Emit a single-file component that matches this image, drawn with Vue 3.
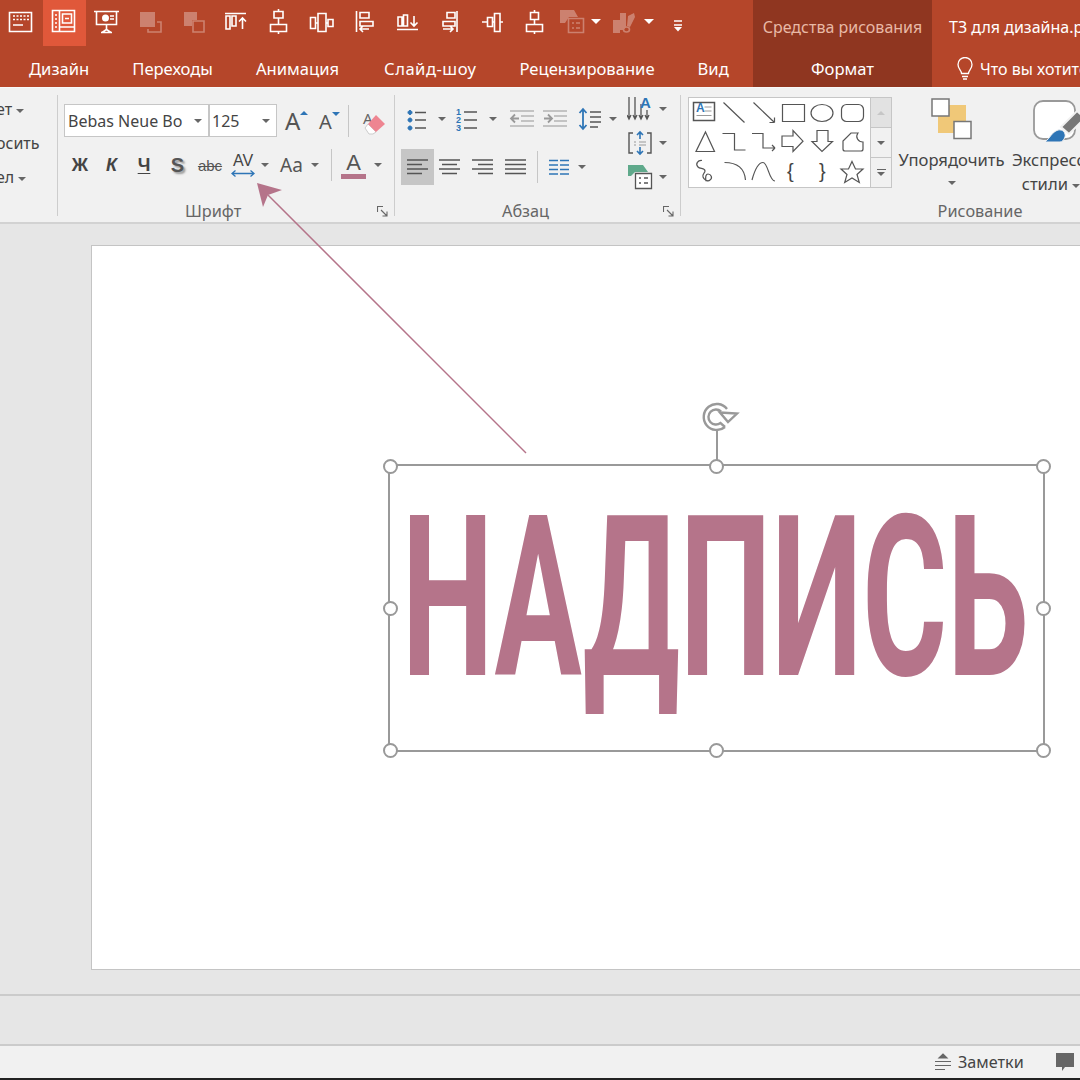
<template>
  <div class="app">
    <!-- title bar + tabs -->
    <header class="head">
      <div class="head-main">
        <div class="qat">
          <div
            v-for="(item, i) in qat"
            :key="i"
            :class="['qat-item', { active: item.active, dim: item.dim, wide: item.caret }]"
            :style="item.w ? { width: item.w + 'px' } : null"
          >
            <svg width="26" height="26" viewBox="0 0 26 26">
              <path :d="item.d" fill="none" stroke="#fff" stroke-width="1.6" />
              <path v-if="item.solid" :d="item.solid" fill="#fff" />
            </svg>
            <span v-if="item.caret" class="caret white"></span>
          </div>
        </div>
        <nav class="tabs">
          <span v-for="t in tabs" :key="t">{{ t }}</span>
        </nav>
      </div>
      <div class="head-context">
        <div class="ctx-title">Средства рисования</div>
        <div class="ctx-tab">Формат</div>
      </div>
      <div class="head-right">
        <div class="doc-title">ТЗ для дизайна.pptx</div>
        <div class="tell-me">
          <svg width="20" height="24" viewBox="0 0 20 24">
            <path d="M6.500 16.500c0-3-3.500-4.500-3.500-9a7 7 0 0 1 14 0c0 4.500-3.500 6-3.500 9zM7 19.500h6M8 22h4" fill="none" stroke="#fff" stroke-width="1.300" />
          </svg>
          <span>Что вы хотите сделать?</span>
        </div>
      </div>
    </header>

    <!-- ribbon -->
    <section class="ribbon">
      <div class="group g-clip">
        <div class="clip-row">ет<i class="caret"></i></div>
        <div class="clip-row">осить</div>
        <div class="clip-row">ел<i class="caret"></i></div>
      </div>

      <div class="group g-font">
        <div class="font-row1">
          <div class="combo name">Bebas Neue Bo<i class="caret"></i></div>
          <div class="combo size">125<i class="caret"></i></div>
          <div class="grow big">A<i class="tri up"></i></div>
          <div class="grow small">A<i class="tri down"></i></div>
          <i class="sep tall"></i>
          <svg class="eraser" width="24" height="28" viewBox="0 0 24 28">
            <text x="1" y="17" class="eraser-a">A</text>
            <path d="M6 17 14 25 11 27H7L3 21z" fill="#fff" stroke="#ccc" stroke-width="1" />
            <path d="M14 8l9 9-9 8-8-8z" fill="#ee8591" />
          </svg>
        </div>
        <div class="font-row2">
          <b class="fmt">Ж</b>
          <b class="fmt"><em>К</em></b>
          <b class="fmt under">Ч</b>
          <b class="fmt shadow">S</b>
          <span class="fmt strike">abc</span>
          <span class="fmt av">
            AV
            <svg width="24" height="7" viewBox="0 0 24 7">
              <path d="M1 3.500h22M4.500 .5l-3.500 3 3.500 3M19.500 .5l3.500 3-3.500 3" fill="none" stroke="#2e75b6" stroke-width="1.300" />
            </svg>
          </span>
          <i class="caret"></i>
          <span class="fmt aa">Aa</span>
          <i class="caret"></i>
          <i class="sep tall"></i>
          <span class="fmt color">A<i class="bar"></i></span>
          <i class="caret"></i>
        </div>
        <div class="g-label">
          <span></span>Шрифт
          <svg class="launcher" width="11" height="11" viewBox="0 0 11 11">
            <path d="M.5 6V.5H6M4 4l6 6M10 5.500V10H5.500" fill="none" stroke="#666" stroke-width="1.100" />
          </svg>
        </div>
      </div>

      <div class="group g-para">
        <div class="para-body">
          <div class="para-left">
            <div class="para-row1">
              <svg width="26" height="26" viewBox="0 0 26 26">
                <path d="M4 4.500a2 2 0 1 0 .01 0M4 12a2 2 0 1 0 .01 0M4 20a2 2 0 1 0 .01 0" fill="#2e75b6" stroke="#2e75b6" />
                <path d="M9 6.500h11M9 14h11M9 22h11" stroke="#555" stroke-width="1.500" />
              </svg>
              <i class="caret"></i>
              <svg width="26" height="26" viewBox="0 0 26 26">
                <text x="1" y="9" class="num">1</text>
                <text x="1" y="17" class="num">2</text>
                <text x="1" y="25" class="num">3</text>
                <path d="M9 6h13M9 14h13M9 22h13" stroke="#555" stroke-width="1.500" />
              </svg>
              <i class="caret"></i>
              <svg width="26" height="26" viewBox="0 0 26 26">
                <path d="M1 5h24M12 10h13M12 15h13M1 20h24" stroke="#b4b4b4" stroke-width="1.500" />
                <path d="M10 12.500H2M6 8.500l-4 4 4 4" fill="none" stroke="#999" stroke-width="1.800" />
              </svg>
              <svg width="26" height="26" viewBox="0 0 26 26">
                <path d="M1 5h24M12 10h13M12 15h13M1 20h24" stroke="#b4b4b4" stroke-width="1.500" />
                <path d="M2 12.500h8M6 8.500l4 4-4 4" fill="none" stroke="#999" stroke-width="1.800" />
              </svg>
              <svg class="ls" width="26" height="26" viewBox="0 0 26 26">
                <path d="M5 3v20M1.500 7 5 3l3.500 4M1.500 19 5 23l3.500-4" fill="none" stroke="#2e75b6" stroke-width="1.800" />
                <path d="M12 6h11M12 11h11M12 16h11M12 21h8" stroke="#555" stroke-width="1.500" />
              </svg>
              <i class="caret"></i>
            </div>
            <div class="para-row2">
              <span v-for="(a, i) in aligns" :key="i" :class="['al', { on: i === 0 }]">
                <svg width="22" height="18" viewBox="0 0 22 18">
                  <path :d="a" stroke="#555" stroke-width="1.500" />
                </svg>
              </span>
              <i class="sep tall"></i>
              <svg class="cols" width="22" height="18" viewBox="0 0 22 18">
                <path d="M1 2.500h9M1 7h9M1 11.500h9M1 16h9M12 2.500h9M12 7h9M12 11.500h9M12 16h9" stroke="#2e75b6" stroke-width="1.500" />
              </svg>
              <i class="caret"></i>
            </div>
          </div>
          <div class="para-right">
            <div class="pr-item">
              <svg width="26" height="26" viewBox="0 0 26 26">
                <path d="M2 1v21M8 1v21M14 8v14M20 14v8M0 19l2 4 2-4M6 19l2 4 2-4M12 19l2 4 2-4M18 19l2 4 2-4" fill="none" stroke="#555" stroke-width="1.300" />
                <text x="13" y="12" class="dir-a">A</text>
              </svg>
              <i class="caret"></i>
            </div>
            <div class="pr-item">
              <svg width="26" height="26" viewBox="0 0 26 26">
                <path d="M6 3H2v20h4M20 3h4v20h-4" fill="none" stroke="#555" stroke-width="1.400" />
                <path d="M13 2v7M10 5l3-3 3 3M13 24v-7M10 21l3 3 3-3" fill="none" stroke="#2e75b6" stroke-width="1.600" />
                <path d="M7 12h2M7 15h2M12 12h7M12 15h7" stroke="#999" stroke-width="1" />
              </svg>
              <i class="caret"></i>
            </div>
            <div class="pr-item">
              <svg width="26" height="26" viewBox="0 0 26 26">
                <path d="M1 1h15l5 7H8l-4 4H1z" fill="#5fa98b" />
                <path d="M8.500 9.500h16v15h-16z" fill="#fff" stroke="#555" stroke-width="1.300" />
                <path d="M12 14h2M12 19h2M17 14h4M17 19h4" stroke="#555" stroke-width="1.300" />
              </svg>
              <i class="caret"></i>
            </div>
          </div>
        </div>
        <div class="g-label">
          <span></span>Абзац
          <svg class="launcher" width="11" height="11" viewBox="0 0 11 11">
            <path d="M.5 6V.5H6M4 4l6 6M10 5.500V10H5.500" fill="none" stroke="#666" stroke-width="1.100" />
          </svg>
        </div>
      </div>

      <div class="group g-draw">
        <div class="draw-body">
          <div class="gallery">
            <svg width="181" height="90" viewBox="0 0 181 90" class="shapes">
              <g fill="none" stroke="#555" stroke-width="1.200">
                <path d="M4.500 5.500h21v18h-21z" stroke-width="1.500" />
                <path d="M15.500 10h7M15.500 14h7M7.500 18.500h15" stroke="#999" />
                <path d="M34.500 5.500l21 20M64.500 5.500l21 20M85.500 25.500h-5M85.500 25.500v-5" />
                <path d="M93.500 7.500h22v17h-22z" />
                <ellipse cx="133" cy="16" rx="11" ry="8.500" />
                <rect x="152.500" y="7.500" width="22" height="17" rx="5" />
                <path d="M16.500 35 25.500 54.500h-18.500z" />
                <path d="M33.500 36.500h12V53h11M63 36.500h11V51h12M86 51l-3-3M86 51l-3 3" />
                <path d="M93 39h11v-5.500L114 44.200 104 54.500V49.500H93z" />
                <path d="M128 33.500h11V44.500h4.500L133 54.500 123 44.500h5z" />
                <path d="M156 54q-2 0-2-2v-8l8-8h7c-3 4 0 9 5 9v7q0 2-2 2z" />
                <path d="M13 63.500C9 63 6 67 9 70c2 2 7 1 7 4 0 2-3 3-2 6 1 3 5 5 7 3 3-2 1-6-2-6-2 0-3 3-2 7" />
                <path d="M35.500 65.500c13 0 20 6 21 17.500M63 83c3-11 7-17.500 11-17.500 5 0 6 18.500 12 18.500" />
                <path d="M163 64.500l3.500 7.500h7.500l-6 5.500 2.300 8-7.300-4.500-7.300 4.500 2.300-8-6-5.500h7.500z" />
              </g>
              <text x="98" y="81" class="brace">{</text>
              <text x="130" y="81" class="brace">}</text>
              <text x="7" y="15" class="tb-a">A</text>
            </svg>
            <div class="scroll">
              <div class="sc up"><i class="tri-up"></i></div>
              <div class="sc"><i class="caret"></i></div>
              <div class="sc more"><b></b><i class="caret"></i></div>
            </div>
          </div>
          <div class="bigbtn arrange">
            <svg width="42" height="42" viewBox="0 0 42 42">
              <rect x="7" y="7" width="28" height="28" fill="#f0c878" />
              <rect x="1" y="1" width="17" height="17" fill="#fff" stroke="#777" stroke-width="1.500" />
              <rect x="23" y="23.500" width="17" height="17" fill="#fff" stroke="#777" stroke-width="1.500" />
            </svg>
            <div class="big-text">Упорядочить</div>
            <i class="caret"></i>
          </div>
          <div class="bigbtn express">
            <svg width="52" height="44" viewBox="0 0 52 44">
              <rect x="1" y="1" width="41" height="38" rx="9" fill="#fff" stroke="#999" stroke-width="1.800" />
              <path d="M28 27 44 11l8 7-16 16z" fill="#777" stroke="#f1f1f1" stroke-width="2" />
              <path d="M12 42C17 38 19 32 25 30c5-1 8 3 7 7-1 3-3 5-5 5z" fill="#2e75b6" stroke="#f1f1f1" stroke-width="1" />
            </svg>
            <div class="big-text">Экспресс-</div>
            <div class="big-text">стили <i class="caret"></i></div>
          </div>
        </div>
        <div class="g-label"><span></span>Рисование<span></span></div>
      </div>
    </section>

    <!-- slide area -->
    <main class="stage">
      <div class="slide">
        <div class="selbox">
          <span class="caption">НАДПИСЬ</span>
          <i
            v-for="h in handles"
            :key="h.x + '-' + h.y"
            class="handle"
            :style="{ left: h.x + '%', top: h.y + '%' }"
          ></i>
          <i class="rot-line"></i>
          <svg class="rot" width="40" height="36" viewBox="0 0 40 36">
            <path d="M27 11A13 13 0 1 0 25 29M21 13.500A7.500 7.500 0 1 0 20.500 25L25 29" fill="none" stroke="#999" stroke-width="2.400" />
            <path d="M20 14.500 37 15.500 28 24z" fill="#fff" stroke="#999" stroke-width="2.400" />
          </svg>
        </div>
      </div>
    </main>

    <div class="notes-pane"></div>

    <footer class="status">
      <svg width="18" height="18" viewBox="0 0 18 18">
        <path d="M5 5l4-4 4 4zM1 8.500h16M1 12.500h16M1 16.500h10" fill="#666" stroke="#666" stroke-width="1.200" />
      </svg>
      <span class="notes-label">Заметки</span>
      <svg class="comment" width="18" height="19" viewBox="0 0 18 19">
        <path d="M0 0h18v14h-9l-3 4v-4H0z" fill="#666" />
      </svg>
    </footer>

    <!-- callout arrow, lies over the ribbon and the slide -->
    <svg class="callout" width="1080" height="1080" viewBox="0 0 1080 1080">
      <path d="M526 453 268 195" stroke="#b5748a" stroke-width="1.500" />
      <path d="M257 183 282 190 268 195 263 207z" fill="#b5748a" />
    </svg>
  </div>
</template>

<script setup>
const qat = [
  { d: 'M1.500 4.500h22v19h-22zM5 8h2M8.500 8h2M12 8h2M15.500 8h2M19 8h2M5 11.500h2M8.500 11.500h2M12 11.500h2M15.500 11.500h2M19 11.500h2M5 17h10' },
  { d: 'M1.500 2.500h22v21h-22zM8.500 2.500v21M4 7h2M4 11h2M4 15h2M4 19h2M11.500 6h9v9h-9zM14 10.500h4M8.500 19h15', active: true },
  { d: 'M0 3.500h25M2.500 3.500v13h20v-13M12.500 16.500v5M7 24.500h11M12.500 21.500 8 24.500M12.500 21.500l4.500 3M16 8h4M16 11h4', solid: 'M8 10a3.500 3.500 0 1 0 7 0a3.500 3.500 0 1 0-7 0z' },
  { d: 'M20 14h4v10H11v-3', solid: 'M3 4h15v15H3z', dim: true },
  { d: 'M13 13h11v11H13z', solid: 'M4 4h13v8h-5v6H4z', dim: true },
  { d: 'M3 5.500h21M4 8h4v13H4zM10 8h4v10h-4zM20.500 21V10M17 13.500l3.500-3.500 3.500 3.500' },
  { d: 'M13.500 1v2.500M13.500 10v6M13.500 24v2M9 3.500h9V10H9zM5.500 16.500h16v7h-16z' },
  { d: 'M2.500 9.500h5v11h-5zM10 5.500h8v18h-8zM20 11.500h5v7h-5zM7.500 15H10M18 15h2' },
  { d: 'M5.500 3v21M9 4.500h9V10H9zM9 13.500h13V18H9zM9 21h9M12 18l-3 3 3 3' },
  { d: 'M3 21.500h21M4 9h4v9H4zM9.500 7h4v11h-4zM20 8v10M16.500 14.500 20 18l3.500-3.500' },
  { d: 'M21 3v21M11 4.500h8V10h-8zM7 13.500h12V18H7zM7 21h10M14 18l3 3-3 3' },
  { d: 'M3 14h5M8.500 9.500h5v9h-5zM15.500 5.500h5.500v18h-5.500zM13.500 14h2M21 14h3' },
  { d: 'M12.500 2v2.500M12.500 11.500v5M12.500 23.500V26M8.500 4.500h8v7h-8zM4.500 16.500h16v7h-16z' },
  { d: 'M8.500 10.500h15v14h-15zM12 15h2M12 20h2M16 15h4M16 20h4', solid: 'M0 2h14l4 7H9l-4 6H0z', dim: true, caret: true, w: 53 },
  { d: 'M10.500 21.500a3 2.500 0 1 0 6 0a3 2.500 0 1 0-6 0', solid: 'M0 12h7v13H0zM7 5h6v14l-3 3H7zM15 8l6-3 1 4-5 10-3-1z', dim: true, caret: true, w: 46.6 },
  { d: 'M10 13h8M10 17h8', solid: 'M10 19h8l-4 4.500z' },
]

const tabs = ['Дизайн', 'Переходы', 'Анимация', 'Слайд-шоу', 'Рецензирование', 'Вид']

const aligns = [
  'M0 2h21M0 6.500h15M0 11h21M0 15.500h15',
  'M0 2h21M3 6.500h15M0 11h21M3 15.500h15',
  'M0 2h21M6 6.500h15M0 11h21M6 15.500h15',
  'M0 2h21M0 6.500h21M0 11h21M0 15.500h21',
]

const handles = [
  { x: 0, y: 0 }, { x: 50, y: 0 }, { x: 100, y: 0 },
  { x: 0, y: 50 }, { x: 100, y: 50 },
  { x: 0, y: 100 }, { x: 50, y: 100 }, { x: 100, y: 100 },
]
</script>

<style>
html, body {
  margin: 0;
  overflow: hidden;
  background: #e6e6e6;
}
</style>

<style scoped>
.app {
  position: relative;
  width: 1080px;
  height: 1080px;
  overflow: hidden;
  display: flex;
  flex-direction: column;
  background: #e6e6e6;
  color: #444;
  font-family: "Noto Sans", "Open Sans", sans-serif;
  font-size: 16px;
}

i { font-style: normal; }

.caret {
  display: inline-block;
  width: 0;
  height: 0;
  border: 4px solid transparent;
  border-top: 4px solid #666;
  border-bottom: 0;
}
.caret.white {
  border-top-color: #fff;
  border-left-width: 5px;
  border-right-width: 5px;
  border-top-width: 5px;
}

.sep {
  display: block;
  width: 1px;
  background: #c6c6c6;
}
.sep.tall { height: 32px; }

/* head */
.head {
  display: flex;
  height: 87px;
  flex: none;
  background: #b5462a;
  color: #fff;
}
.head-main { width: 753px; flex: none; }
.qat {
  display: flex;
  height: 46px;
}
.qat-item {
  width: 42.8px;
  flex: none;
  display: flex;
  align-items: center;
  justify-content: center;
  padding-bottom: 4px;
  box-sizing: border-box;
}
.qat-item.active { background: #e0583a; }
.qat-item.dim svg { opacity: 0.32; }
.qat-item.wide { gap: 5px; justify-content: flex-start; padding-left: 4px; }
.tabs {
  display: flex;
  gap: 43px;
  padding: 3px 0 0 29px;
  box-sizing: border-box;
  height: 41px;
  align-items: center;
  white-space: nowrap;
  font-size: 16.6px;
}
.tabs span:nth-child(4) {
  margin-left: 2px;
  letter-spacing: 0.5px;
}
.head-context {
  width: 179px;
  flex: none;
  background: #8f3620;
  text-align: center;
}
.ctx-title {
  height: 46px;
  line-height: 54px;
  color: #e8b9a6;
  white-space: nowrap;
}
.ctx-tab {
  height: 41px;
  line-height: 46px;
  font-size: 16.6px;
}
.head-right {
  flex: 1;
  padding-left: 17px;
  white-space: nowrap;
  overflow: hidden;
}
.doc-title {
  height: 46px;
  line-height: 54px;
}
.tell-me {
  height: 41px;
  padding-top: 4px;
  box-sizing: border-box;
  display: flex;
  align-items: center;
  gap: 5px;
  margin-left: 6px;
}
.tell-me svg { flex: none; }

/* ribbon */
.ribbon {
  flex: none;
  height: 137px;
  box-sizing: border-box;
  padding: 7px 0 6px;
  display: flex;
  background: #f1f1f1;
  border-top: 1px solid #f8f8f8;
  border-bottom: 2px solid #d2d2d2;
}
.group {
  flex: none;
  box-sizing: border-box;
  display: flex;
  flex-direction: column;
  border-right: 1px solid #cdcdcd;
}
.g-label {
  margin-top: auto;
  margin-bottom: -6px;
  height: 22px;
  line-height: 22px;
  display: grid;
  grid-template-columns: 1fr auto 1fr;
  align-items: center;
  font-size: 16.3px;
  color: #666;
}
.g-font .g-label { grid-template-columns: 127px auto 1fr; }
.g-para .g-label { grid-template-columns: 107px auto 1fr; }
.launcher {
  justify-self: end;
  margin-right: 6px;
}

.g-clip {
  width: 58px;
  align-items: flex-start;
  overflow: hidden;
}
.clip-row {
  height: 34px;
  line-height: 34px;
  white-space: nowrap;
}
.clip-row:nth-child(1) { margin: -3px 0 0 -4px; }
.clip-row:nth-child(2) { margin-left: -4px; }
.clip-row:nth-child(3) { margin-left: -4px; }
.clip-row .caret { vertical-align: middle; margin-left: 4px; }

.g-font { width: 337px; }
.font-row1 {
  display: flex;
  align-items: center;
  height: 33px;
  margin: 9px 0 0 6px;
}
.combo {
  height: 33px;
  box-sizing: border-box;
  background: #fff;
  border: 1px solid #c6c6c6;
  display: flex;
  align-items: center;
  justify-content: space-between;
  white-space: nowrap;
  color: #444;
}
.combo.name { width: 145px; padding: 0 6px 0 3px; }
.combo.size { width: 68px; padding: 0 6px 0 2px; }
.grow {
  display: flex;
  color: #555;
  line-height: 1;
}
.grow.big { font-size: 24px; margin-left: 8px; width: 34px; }
.grow.small { font-size: 20px; width: 29px; padding-top: 3px; box-sizing: border-box; }
.tri {
  width: 0;
  height: 0;
  border: 4px solid transparent;
  border-top: 0;
  border-bottom: 4px solid #2e75b6;
  margin-top: 2px;
}
.tri.down {
  border-bottom: 0;
  border-top: 4px solid #2e75b6;
  margin-top: 0;
}
.eraser { margin-left: 13px; }
.eraser-a { font: 15px "Noto Sans", sans-serif; fill: #666; }

.font-row2 {
  display: grid;
  grid-template-columns: 32px 31px 34px 33px 32px 34px 10px 38px 13px 20px 25px 24px;
  align-items: center;
  justify-items: center;
  height: 34px;
  margin: 11px 0 0 6px;
}
.fmt { color: #444; line-height: 1; font-family: "Liberation Sans", Arial, sans-serif; }
b.fmt { font-size: 18px; }
.under { text-decoration: underline; text-underline-offset: 2px; }
.shadow { text-shadow: 2px 2px 2px #999; font-size: 20px !important; color: #555; }
.strike { text-decoration: line-through; font-size: 15px; color: #555; }
.av {
  display: flex;
  flex-direction: column;
  align-items: center;
  font-size: 16px;
  color: #444;
  gap: 1px;
}
.aa { font-size: 19px; color: #555; font-family: "Noto Sans", sans-serif; margin-left: 5px; }
.color {
  display: flex;
  flex-direction: column;
  align-items: center;
  font-size: 22px;
  color: #555;
  width: 100%;
}
.bar {
  display: block;
  width: 100%;
  height: 5px;
  background: #b5748a;
}

.g-para { width: 286px; }
.para-body { display: flex; }
.para-left { width: 232px; flex: none; padding: 9px 0 0 6px; box-sizing: border-box; }
.para-row1 {
  display: grid;
  grid-template-columns: 26px 20px 32px 18px 40px 26px 38px 14px;
  align-items: center;
  justify-items: center;
  height: 30px;
  margin-left: 5px;
}
.ls { margin-left: 8px; }
.para-row2 {
  display: grid;
  grid-template-columns: 33px 32px 33px 33px 10px 30px 20px;
  align-items: center;
  justify-items: center;
  height: 36px;
  margin-top: 15px;
}
.cols { margin-left: 4px; }
.al {
  width: 100%;
  height: 36px;
  display: flex;
  align-items: center;
  justify-content: center;
}
.al.on { background: #c6c6c6; }
.num { font: bold 9px "Liberation Sans", sans-serif; fill: #2e75b6; }
.para-right { margin-top: -3px; }
.pr-item {
  height: 34px;
  display: flex;
  align-items: center;
  gap: 6px;
}
.dir-a { font: bold 15px "Liberation Sans", sans-serif; fill: #2e75b6; }

.g-draw { width: 598px; border-right: 0; }
.draw-body {
  display: flex;
  align-items: flex-start;
  padding: 2px 0 0 7px;
}
.gallery {
  display: flex;
  height: 91px;
  box-sizing: border-box;
  border: 1px solid #c6c6c6;
  background: #fff;
  flex: none;
}
.shapes { display: block; flex: none; margin-top: -1px; }
.brace { font: 20px "Liberation Sans", sans-serif; fill: #444; }
.tb-a { font: bold 12px "Liberation Sans", sans-serif; fill: #2e75b6; }
.scroll {
  width: 20px;
  display: flex;
  flex-direction: column;
  border-left: 1px solid #c6c6c6;
  background: #f1f1f1;
}
.sc {
  flex: 1;
  display: flex;
  flex-direction: column;
  align-items: center;
  justify-content: center;
  gap: 2px;
  border-top: 1px solid #c6c6c6;
}
.sc.up { border-top: 0; background: #e2e2e2; }
.tri-up {
  width: 0;
  height: 0;
  border: 4px solid transparent;
  border-top: 0;
  border-bottom: 4px solid #c6c6c6;
}
.sc.more b {
  display: block;
  width: 9px;
  height: 1px;
  background: #666;
}
.bigbtn {
  flex: none;
  display: flex;
  flex-direction: column;
  align-items: center;
}
.big-text {
  white-space: nowrap;
  line-height: 24px;
  color: #444;
  font-size: 16.6px;
}
.arrange { width: 107px; margin-left: 6px; }
.arrange svg { margin: 1px 0 8px; }
.arrange .caret { margin-top: 9px; }
.express { width: 80px; margin-left: 6px; }
.express svg { margin: 3px 0 4px 16px; }
.express .caret { vertical-align: middle; }

/* slide */
.stage {
  flex: 1;
  padding: 21px 0 0 91px;
  min-height: 0;
}
.slide {
  position: relative;
  width: 1100px;
  height: 725px;
  box-sizing: border-box;
  background: #fff;
  border: 1px solid #c4c4c4;
}
.selbox {
  position: absolute;
  left: 296px;
  top: 218px;
  width: 657px;
  height: 288px;
  box-sizing: border-box;
  border: 2px solid #999;
  display: flex;
  justify-content: center;
}
.caption {
  flex: none;
  width: max-content;
  height: 225px;
  margin: 20px 0 0 -3px;
  font-family: Roboto, "Liberation Sans", sans-serif;
  font-weight: 700;
  font-size: 225px;
  line-height: 225px;
  color: #b5748a;
  transform: scaleX(0.577);
  transform-origin: center;
  white-space: nowrap;
}
.handle {
  position: absolute;
  width: 15px;
  height: 15px;
  box-sizing: border-box;
  margin: -7.500px 0 0 -7.500px;
  background: #fff;
  border: 2px solid #999;
  border-radius: 50%;
}
.rot-line {
  position: absolute;
  left: 50%;
  top: -36px;
  width: 2px;
  height: 30px;
  margin-left: -1px;
  background: #999;
}
.rot {
  position: absolute;
  left: 50%;
  top: -68px;
  margin-left: -17px;
}

.notes-pane {
  flex: none;
  height: 52px;
  box-sizing: border-box;
  background: #e6e6e6;
  border-top: 2px solid #cbcbcb;
  border-bottom: 2px solid #cbcbcb;
}
.status {
  flex: none;
  height: 34px;
  box-sizing: border-box;
  display: flex;
  align-items: center;
  padding-left: 934px;
  background: #f1f1f1;
  border-bottom: 2px solid #222;
  font-size: 16.2px;
  white-space: nowrap;
}
.notes-label { margin-left: 6px; color: #444; }
.comment { margin-left: 32px; flex: none; }

.callout {
  position: absolute;
  left: 0;
  top: 0;
  pointer-events: none;
}
</style>
